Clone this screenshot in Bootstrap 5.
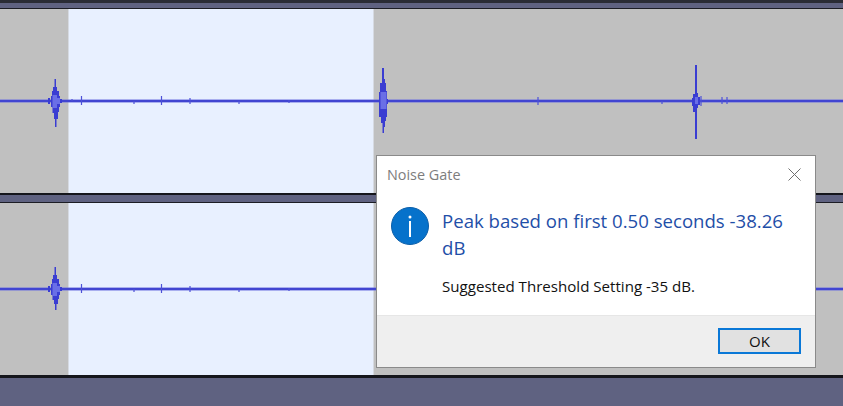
<!DOCTYPE html>
<html lang="en">
  <head>
    <meta charset="UTF-8" />
    <meta name="viewport" content="width=device-width, initial-scale=1.0" />
    <title>Noise Gate</title>
    <link
      rel="stylesheet"
      href="https://cdn.jsdelivr.net/npm/bootstrap@5.3.0/dist/css/bootstrap.min.css"
    />
    <style>
      html,
      body {
        height: 100%;
        overflow: hidden;
      }
      body {
        background: #5f6281;
        font-family: "Open Sans", "Liberation Sans", sans-serif;
      }
      .app-frame {
        width: 843px;
        height: 406px;
      }
      .top-strip {
        height: 9px;
        flex: none;
        background: #5f6281;
        border-top: 3px solid #2a2c35;
        border-bottom: 1px solid #1c1d24;
      }
      .mid-strip {
        height: 10px;
        flex: none;
        background: #5f6281;
        border-top: 2px solid #15161c;
        border-bottom: 1px solid #1c1d24;
      }
      .end-strip {
        flex: 1;
        background: #5f6281;
        border-top: 3px solid #15161c;
      }
      .track-pane {
        flex: none;
        background: #c0c0c0;
      }
      .track-one {
        height: 184px;
      }
      .track-two {
        height: 172px;
      }
      .sel-zone {
        margin-left: 68px;
        width: 306px;
        background: #e8f0ff;
        border-left: 1px solid #d6dae2;
        border-right: 1px solid #d6dae2;
      }
      .wave-svg {
        left: 0;
        top: 0;
      }
      .wave-halo {
        stroke: #6a6ee0;
        stroke-width: 3;
        fill: none;
      }
      .wave-base {
        stroke: #3538cc;
        stroke-width: 1.5;
        fill: none;
      }
      .wave-tick {
        stroke: #4d51d8;
        stroke-width: 1.2;
        fill: none;
      }
      .wave-body {
        fill: #3a3dd2;
      }
      .wave-core {
        fill: #6a6fe6;
      }
      .gate-dialog {
        left: 376px;
        top: 155px;
        width: 440px;
        height: 213px;
        background: #fff;
        border: 1px solid #8a8a8a;
      }
      .gate-title {
        height: 38px;
        padding: 8px 0 0 10px;
        font-size: 14.4px;
        color: #7d7d7d;
      }
      .gate-close {
        right: 14px;
        top: 12px;
      }
      .gate-body {
        padding: 13px 20px 0 14px;
        gap: 13px;
      }
      .gate-icon {
        flex: none;
      }
      .gate-head {
        font-size: 18.6px;
        line-height: 27px;
        color: #1f4fa8;
      }
      .gate-sub {
        font-size: 15.1px;
        line-height: 20px;
        color: #111;
        margin-top: 15px;
      }
      .gate-foot {
        height: 52px;
        background: #efefef;
        border-top: 1px solid #e6e6e6;
        padding: 12px 14px 0 0;
      }
      .gate-ok {
        width: 83px;
        height: 26px;
        padding: 0;
        border: 2px solid #0a78d7;
        border-radius: 0;
        background: #e1e1e1;
        font-size: 15px;
        line-height: 1;
        color: #111;
      }
    </style>
  </head>
  <body>
    <div class="app-frame position-relative d-flex flex-column">
      <div class="top-strip"></div>

      <div class="track-pane track-one position-relative d-flex">
        <div class="sel-zone"></div>
        <svg class="wave-svg position-absolute" width="843" height="184">
          <path class="wave-halo" d="M0 92H843" />
          <path class="wave-base" d="M0 92H843" />
          <path class="wave-tick" d="M72 90V92M81.500 87V96M134 92V95M161.500 87V96M190 89V95M239 92V95M289 91V94M538 88V96M662 92V95M722 88V95M727 88V95M701 87V97" />
          <path class="wave-body" d="M54.500 70H56V78H57V82H59V87H60V90H62V94H60V98H59V103H58V110H56.500V118H55V110H54V104H52.500V98H51V87H52V82H53V78H54.500Z M48 89H50V95H48Z" />
          <path class="wave-core" d="M52.500 86H57V89H60V95H57V99H52.500Z" />
          <path class="wave-body" d="M382 59H384V70H385V74H386V82H387V90H388V95H387V108H386V112H385V118H384V124H382.500V114H381V108H379V83H380V74H382Z" />
          <path class="wave-core" d="M380.500 83H386.500V100H380.500Z" />
          <path class="wave-body" d="M695 56H697V84H698V88H700V96H698V99H697V130H695V103H693V97H692V89H693V85H695Z" />
          <path class="wave-core" d="M695 88H698V95H695Z" />
        </svg>
      </div>

      <div class="mid-strip"></div>

      <div class="track-pane track-two position-relative d-flex">
        <div class="sel-zone"></div>
        <svg class="wave-svg position-absolute" width="843" height="172">
          <path class="wave-halo" d="M0 86H843" />
          <path class="wave-base" d="M0 86H843" />
          <path class="wave-tick" d="M81.500 81V90M134 86V89M161.500 81V90M190 83V89M239 86V89M289 85V88" />
          <path class="wave-body" d="M54.500 64H56V72H57V76H59V81H60V84H62V88H60V92H59V96H58V101H56.500V107H55V101H54V97H52.500V92H51V81H52V76H53V72H54.500Z M48 83H50V89H48Z" />
          <path class="wave-core" d="M52.500 80H57V83H60V89H57V93H52.500Z" />
        </svg>
      </div>

      <div class="end-strip"></div>

      <div class="gate-dialog position-absolute d-flex flex-column">
        <div class="gate-title position-relative">
          Noise Gate
          <svg class="gate-close position-absolute" width="13" height="13" viewBox="0 0 13 13">
            <path d="M0.500 0.500L12.500 12.500M12.500 0.500L0.500 12.500" stroke="#6f6f6f" stroke-width="1" fill="none" />
          </svg>
        </div>
        <div class="gate-body d-flex flex-grow-1">
          <svg class="gate-icon" width="38" height="38" viewBox="0 0 38 38">
            <circle cx="19" cy="19" r="18.500" fill="#0672cb" stroke="#0b5ea8" stroke-width="1" />
            <circle cx="19" cy="10" r="1.500" fill="#fff" />
            <rect x="18" y="14" width="2" height="16" fill="#fff" />
          </svg>
          <div>
            <div class="gate-head">Peak based on first 0.50 seconds -38.26 dB</div>
            <div class="gate-sub">Suggested Threshold Setting -35 dB.</div>
          </div>
        </div>
        <div class="gate-foot d-flex justify-content-end align-items-start">
          <button type="button" class="btn gate-ok">OK</button>
        </div>
      </div>
    </div>
    <script src="https://cdn.jsdelivr.net/npm/bootstrap@5.3.0/dist/js/bootstrap.bundle.min.js"></script>
  </body>
</html>
